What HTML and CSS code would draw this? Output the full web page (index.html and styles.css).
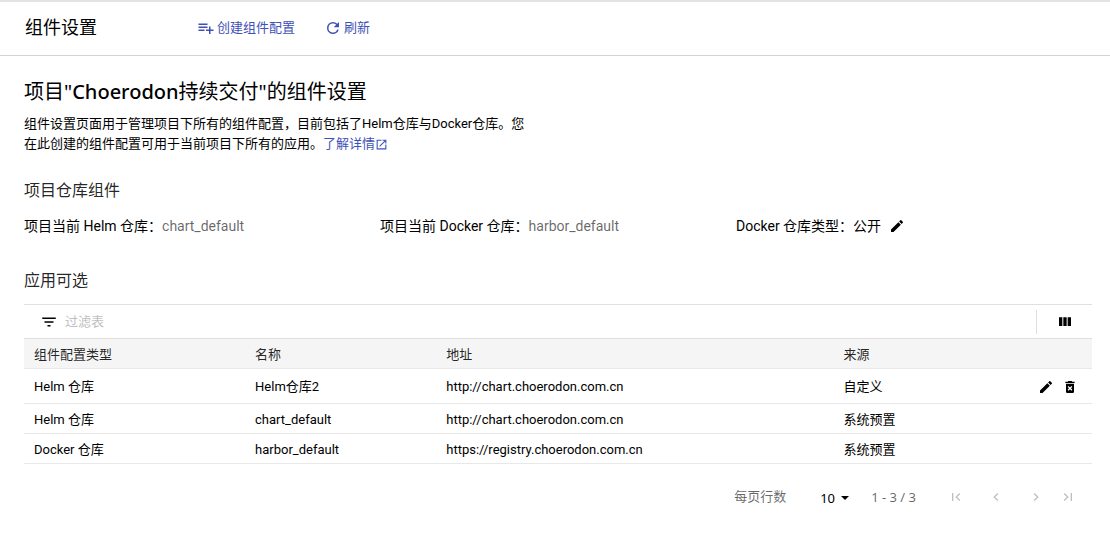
FILE: index.html
```html
<!DOCTYPE html>
<html lang="zh-CN">
<head>
<meta charset="utf-8">
<meta name="viewport" content="width=device-width, initial-scale=1">
<title>组件设置</title>
<link rel="stylesheet" href="styles.css">
</head>
<body>
<header class="page-header">
  <span class="page-title">组件设置</span>
  <button type="button" class="header-btn">
    <svg class="icon" viewBox="0 0 24 24"><path d="M14 10H2v2h12v-2zm0-4H2v2h12V6zm4 8v-4h-2v4h-4v2h4v4h2v-4h4v-2h-4zM2 16h8v-2H2v2z"/></svg>创建组件配置
  </button>
  <button type="button" class="header-btn">
    <svg class="icon" viewBox="0 0 24 24"><path d="M17.65 6.35A7.96 7.96 0 0 0 12 4a8 8 0 1 0 7.73 10h-2.08A6 6 0 1 1 12 6c1.66 0 3.14.69 4.22 1.78L13 11h7V4l-2.35 2.35z"/></svg>刷新
  </button>
</header>
<main class="content">
  <h1 class="headline">项目"<strong>Choerodon</strong>持续交付"的组件设置</h1>
  <p class="description"><span>组件设置页面用于管理项目下所有的组件配置，目前包括了Helm仓库与Docker仓库。您在此创建的组件配置可用于当前项目下所有的应用。</span><a class="more" href="#">了解详情<svg class="icon open" viewBox="0 0 24 24"><path d="M19 19H5V5h7V3H3v18h18v-9h-2v7zM14 3v2h3.59l-9.83 9.83 1.41 1.41L19 6.41V10h2V3h-7z"/></svg></a></p>

  <h2 class="section-title">项目仓库组件</h2>
  <div class="info">
    <div>项目当前 Helm 仓库：<span class="muted">chart_default</span></div>
    <div>项目当前 Docker 仓库：<span class="muted">harbor_default</span></div>
    <div class="info-type">Docker 仓库类型：公开
      <button type="button" class="icon-btn" aria-label="修改"><svg class="icon" viewBox="0 0 24 24"><path d="M3 17.25V21h3.75L17.81 9.94l-3.75-3.75L3 17.25zM20.71 7.04a1 1 0 0 0 0-1.41l-2.34-2.34a1 1 0 0 0-1.41 0l-1.83 1.83 3.75 3.75 1.83-1.83z"/></svg></button>
    </div>
  </div>

  <h2 class="section-title">应用可选</h2>
  <div class="filter-bar">
    <svg class="icon filter-icon" viewBox="0 0 24 24"><path d="M10 18h4v-2h-4v2zM3 6v2h18V6H3zm3 7h12v-2H6v2z"/></svg>
    <input class="filter-input" type="text" placeholder="过滤表" aria-label="过滤表">
    <div class="column-tool">
      <button type="button" class="icon-btn" aria-label="列"><svg class="icon" viewBox="0 0 24 24"><path d="M3 5h5v13H3zM9.500 5h5v13h-5zM16 5h5v13h-5z"/></svg></button>
    </div>
  </div>
  <table class="table">
    <colgroup><col class="col-type"><col class="col-name"><col class="col-url"><col class="col-source"><col class="col-action"></colgroup>
    <thead>
      <tr><th>组件配置类型</th><th>名称</th><th>地址</th><th>来源</th><th></th></tr>
    </thead>
    <tbody>
      <tr class="tall"><td>Helm 仓库</td><td>Helm仓库2</td><td>http://chart.choerodon.com.cn</td><td>自定义</td>
        <td><div class="actions">
          <button type="button" class="icon-btn" aria-label="修改"><svg class="icon" viewBox="0 0 24 24"><path d="M3 17.25V21h3.75L17.81 9.94l-3.75-3.75L3 17.25zM20.71 7.04a1 1 0 0 0 0-1.41l-2.34-2.34a1 1 0 0 0-1.41 0l-1.83 1.83 3.75 3.75 1.83-1.83z"/></svg></button>
          <button type="button" class="icon-btn" aria-label="删除"><svg class="icon" viewBox="0 0 24 24"><path fill-rule="evenodd" d="M6 19a2 2 0 0 0 2 2h8a2 2 0 0 0 2-2V7H6v12zM8.460 11.880l1.410-1.410L12 12.590l2.120-2.120 1.410 1.410L13.410 14l2.120 2.120-1.410 1.410L12 15.410l-2.120 2.120-1.410-1.410L10.590 14l-2.130-2.120zM15.500 4l-1-1h-5l-1 1H5v2h14V4z"/></svg></button>
        </div></td></tr>
      <tr><td>Helm 仓库</td><td>chart_default</td><td>http://chart.choerodon.com.cn</td><td>系统预置</td><td></td></tr>
      <tr><td>Docker 仓库</td><td>harbor_default</td><td>https://registry.choerodon.com.cn</td><td>系统预置</td><td></td></tr>
    </tbody>
  </table>
  <nav class="pagination" aria-label="分页">
    <label for="page-size">每页行数</label>
    <div class="size-box">
      <select id="page-size" class="size"><option>10</option><option>20</option><option>50</option></select>
      <svg class="icon caret" viewBox="0 0 24 24"><path d="M6 9l6 6 6-6z"/></svg>
    </div>
    <span class="range">1 - 3 / 3</span>
    <div class="pager">
      <button type="button" class="icon-btn" disabled aria-label="首页"><svg class="icon" viewBox="0 0 24 24"><path d="M18.410 16.590L13.820 12l4.590-4.590L17 6l-6 6 6 6zM6 6h2v12H6z"/></svg></button>
      <button type="button" class="icon-btn" disabled aria-label="上一页"><svg class="icon" viewBox="0 0 24 24"><path d="M15.410 7.410L14 6l-6 6 6 6 1.410-1.410L10.830 12z"/></svg></button>
      <button type="button" class="icon-btn" disabled aria-label="下一页"><svg class="icon" viewBox="0 0 24 24"><path d="M10 6L8.590 7.410 13.170 12l-4.580 4.590L10 18l6-6z"/></svg></button>
      <button type="button" class="icon-btn last" disabled aria-label="末页"><svg class="icon" viewBox="0 0 24 24"><path d="M5.590 7.410L10.180 12l-4.590 4.590L7 18l6-6-6-6zM16 6h2v12h-2z"/></svg></button>
    </div>
  </nav>
</main>
</body>
</html>
```
FILE: styles.css
```css
* { box-sizing: border-box; }

body {
  margin: 0;
  background: #fff;
  color: #000;
  font: 13px/20px Roboto, "Noto Sans CJK SC", sans-serif;
}

button, input, select { font: inherit; color: inherit; }

.icon {
  flex: none;
  width: 16px;
  height: 16px;
  fill: currentColor;
}

.page-header {
  display: flex;
  align-items: center;
  height: 56px;
  padding: 0 25px 2px;
  border-top: 2px solid #e3e3e3;
  border-bottom: 1px solid #d3d3d3;
}

.page-title {
  margin-right: 100px;
  font-size: 18px;
}

.header-btn {
  display: flex;
  align-items: center;
  gap: 2px;
  margin-right: 29px;
  padding: 0;
  border: 0;
  background: none;
  color: #3f51b5;
}

.header-btn .icon { width: 18px; height: 18px; }

.content { padding: 22px 18px 0 24px; }

.headline {
  margin: 0;
  font-family: "Noto Sans", "Noto Sans CJK SC", sans-serif;
  font-size: 20px;
  font-weight: 400;
  line-height: 28px;
}

.headline strong { font-weight: 500; }

.description {
  max-width: 504px;
  margin: 8px 0 0;
}

.more {
  color: #3f51b5;
  text-decoration: none;
}

.open {
  width: 13px;
  height: 13px;
  vertical-align: -3px;
}

.section-title {
  margin: 25px 0 0;
  color: rgba(0, 0, 0, .87);
  font-size: 16px;
  font-weight: 400;
  line-height: 24px;
}

.info {
  display: grid;
  grid-template-columns: repeat(3, 1fr);
  margin: 13px 0 33px;
  font-size: 14px;
}

.info-type {
  display: flex;
  align-items: center;
  gap: 8px;
}

.muted { color: rgba(0, 0, 0, .6); }

.icon-btn {
  display: flex;
  padding: 0;
  border: 0;
  background: none;
}

.icon-btn:disabled { color: #bfbfbf; }

.filter-bar {
  display: flex;
  align-items: center;
  height: 34px;
  margin-top: 11px;
  padding-left: 16px;
  border-top: 1px solid #e0e0e0;
}

.filter-icon { width: 18px; height: 18px; }

.filter-input {
  flex: 1;
  min-width: 0;
  margin-left: 7px;
  padding: 0;
  border: 0;
  outline: 0;
  background: none;
}

.filter-input::placeholder { color: #bfbfbf; opacity: 1; }

.column-tool {
  display: flex;
  align-items: center;
  justify-content: center;
  width: 56px;
  height: 24px;
  border-left: 1px solid #e0e0e0;
}

.table {
  width: 100%;
  border-collapse: collapse;
  table-layout: fixed;
  border-top: 1px solid #e0e0e0;
}

.col-type { width: 20.7%; }
.col-name { width: 17.9%; }
.col-url { width: 37.2%; }
.col-source { width: 16.2%; }
.col-action { width: 8%; }

th, td {
  height: 30px;
  padding: 2px 10px 0;
  border-bottom: 1px solid #e8e8e8;
  font-weight: 400;
  text-align: left;
}

th {
  background: #f5f5f5;
  color: rgba(0, 0, 0, .87);
}

.tall td { height: 35px; }

.actions {
  display: flex;
  justify-content: flex-end;
  gap: 8px;
  padding-right: 4px;
}

.pagination {
  display: flex;
  align-items: center;
  justify-content: flex-end;
  margin-top: 22px;
  padding-right: 16px;
  color: rgba(0, 0, 0, .6);
}

.size-box {
  display: flex;
  align-items: center;
  margin-left: 34px;
  padding-top: 2px;
  color: #000;
  font-family: "Noto Sans", sans-serif;
}

.size {
  width: 34px;
  height: 20px;
  margin-right: -17px;
  padding: 0;
  border: 0;
  outline: 0;
  background: none;
  appearance: none;
}

.caret { width: 16px; height: 16px; pointer-events: none; }

.range {
  margin-left: 18px;
  font-family: "Noto Sans", sans-serif;
}

.pager {
  display: flex;
  gap: 24px;
  margin-left: 32px;
}

.last { margin-left: -8px; }
```
